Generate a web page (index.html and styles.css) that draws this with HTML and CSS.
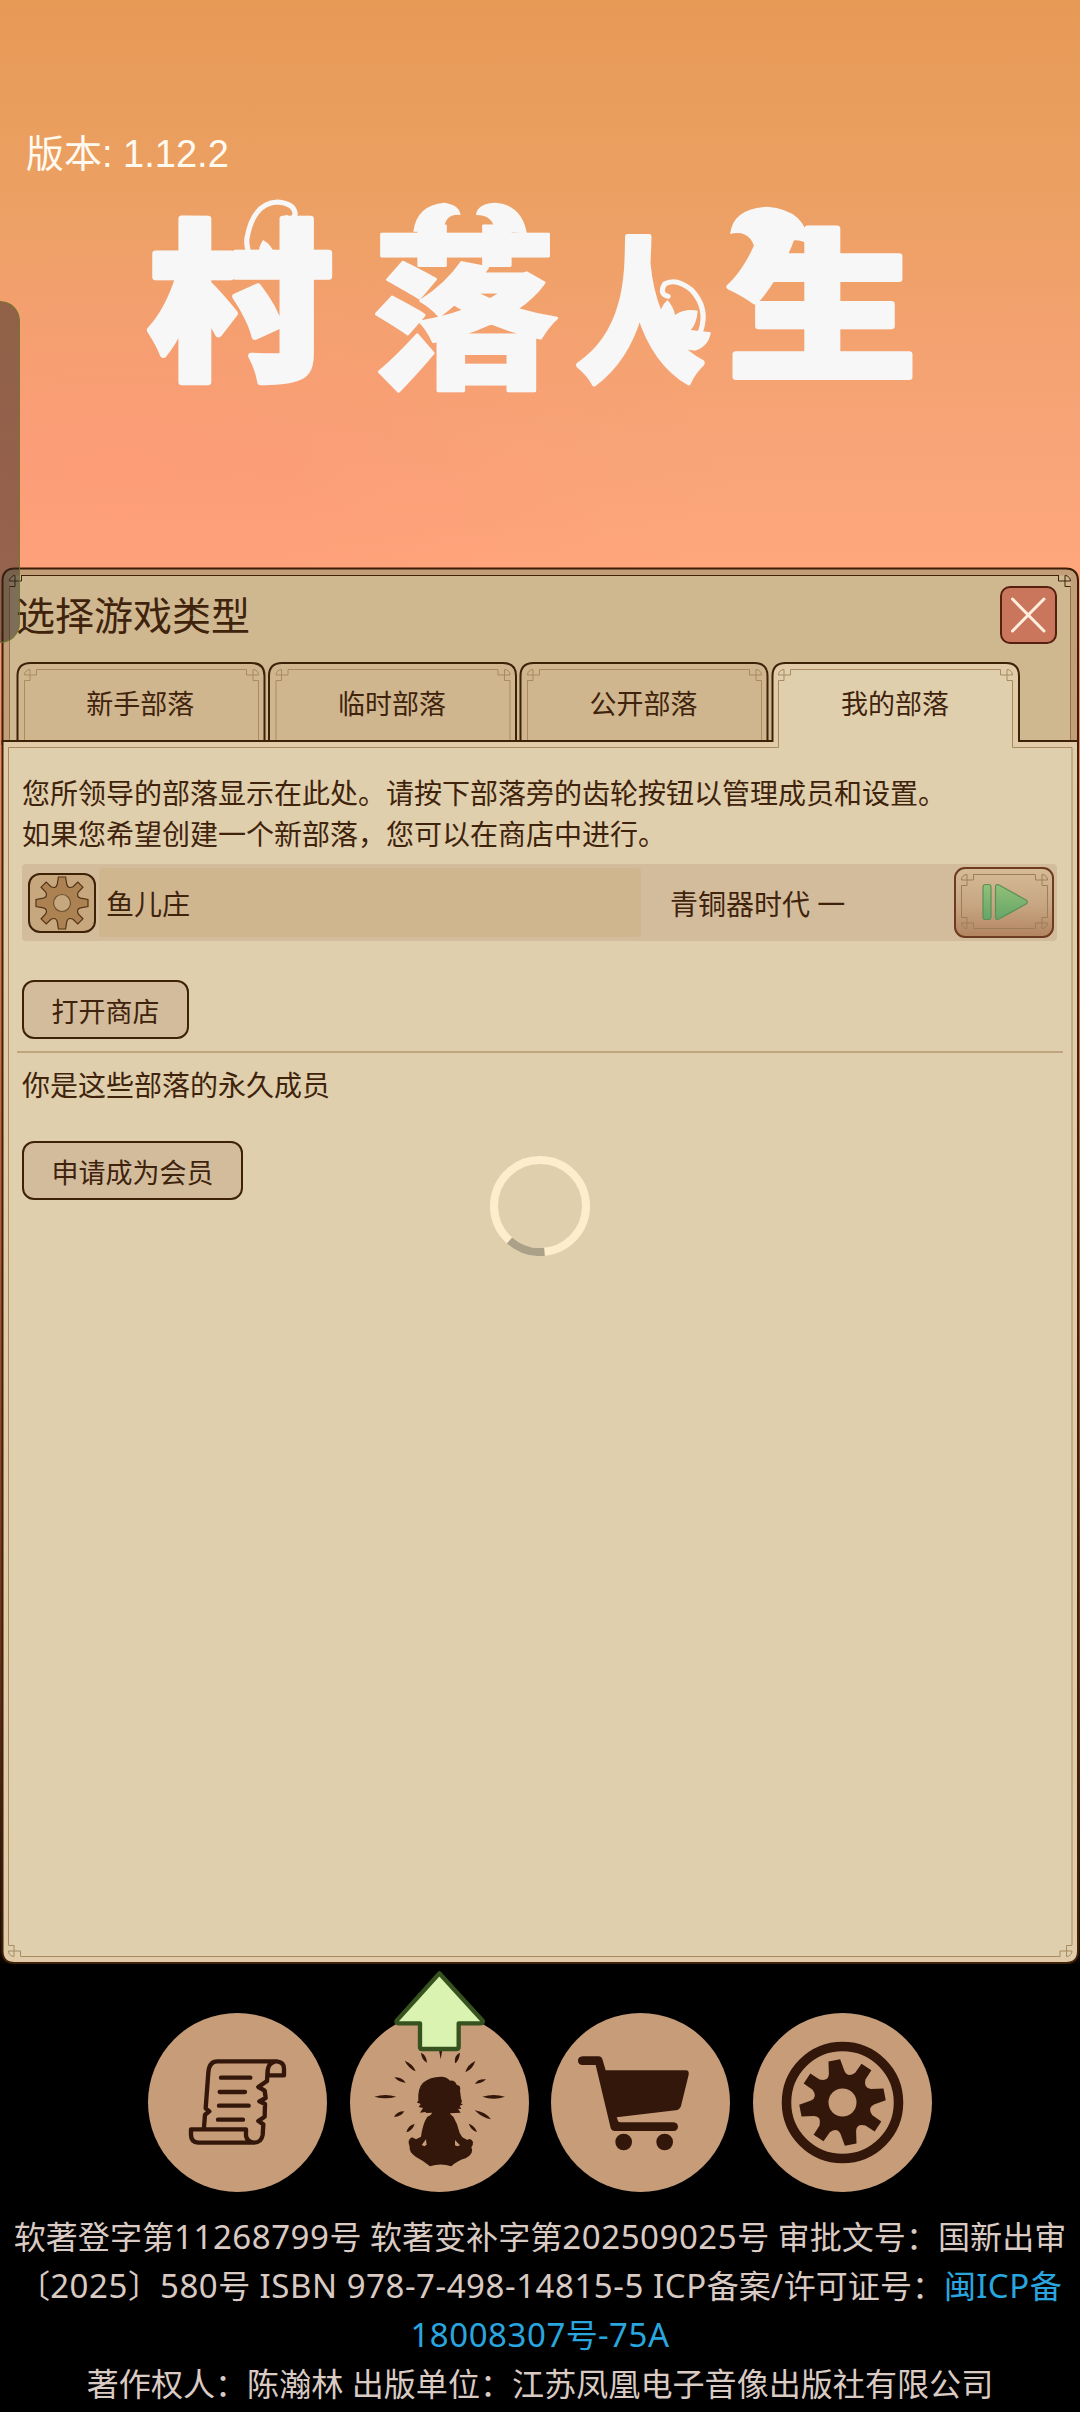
FILE: index.html
```html
<!DOCTYPE html>
<html lang="zh-CN">
<head>
<meta charset="utf-8">
<title>村落人生</title>
<link rel="stylesheet" href="styles.css">
</head>
<body>
<svg class="defs" aria-hidden="true">
  <defs>
    <path id="corner" d="M12 0V5.5H0A5.5 5.5 0 0 1 5.5 0V11H0"/>
    <path id="gear" d="M3.6-26L4.8-18.5Q6-14 11-16.3L15.8-20.9L20.9-15.8L16.3-11Q14-6 18.5-4.8L26-3.6L26 3.6L18.5 4.8Q14 6 16.3 11L20.9 15.8L15.8 20.9L11 16.3Q6 14 4.8 18.5L3.6 26L-3.6 26L-4.8 18.5Q-6 14-11 16.3L-15.8 20.9L-20.9 15.8L-16.3 11Q-14 6-18.5 4.8L-26 3.6L-26-3.6L-18.5-4.8Q-14-6-16.3-11L-20.9-15.8L-15.8-20.9L-11-16.3Q-6-14-4.8-18.5L-3.6-26Z"/>
    <g id="tab-frame">
      <path class="tab-fill" d="M17.5 741V676Q17.5 663 30.5 663H251.500Q264.500 663 264.500 676V741"/>
      <path class="thin" d="M36.500 669.500H246.500M24.500 680.500V740M258.500 680.500V740"/>
      <use href="#corner" class="thin" transform="translate(24.500 669.500)"/>
      <use href="#corner" class="thin" transform="translate(258.500 669.500) scale(-1 1)"/>
    </g>
    <linearGradient id="green" x1="0" y1="0" x2="0" y2="1">
      <stop offset="0" stop-color="#92c078"/><stop offset="1" stop-color="#66a568"/>
    </linearGradient>
  </defs>
</svg>
<main class="screen">
  <header class="hero">
    <p class="version">版本: 1.12.2</p>
    <svg class="logo" viewBox="0 0 1080 567" role="img" aria-label="村落人生">
      <text transform="translate(148 365) scale(.98 .91)" font-size="188">村</text>
      <text class="fine" transform="translate(372 374) scale(.99 .92)" font-size="188">落</text>
      <text transform="translate(576 369) scale(.69 .83)" font-size="186">人</text>
      <text transform="translate(727 366) scale(1.01 .85)" font-size="188">生</text>
      <g transform="translate(0 100) scale(.3444 .3333)">
        <path class="curl" d="M757 500Q712 465 717 415Q735 310 805 306Q855 310 857 342Q850 365 832 353"/>
        <path d="M755 505Q742 450 764 420Q800 440 806 500Z"/>
        <path d="M1200 395Q1210 315 1290 308Q1335 315 1337 345Q1290 340 1288 395Z"/>
        <path d="M1435 395Q1435 345 1382 345Q1385 310 1440 308Q1515 315 1530 400Z"/>
      </g>
      <g transform="translate(540 180) scale(.3444 .3333)">
        <path class="curl" d="M466 455Q490 385 440 330Q395 292 362 312Q345 342 372 349"/>
        <path d="M345 410Q350 380 370 360Q388 380 392 405Q420 385 458 392Q455 430 438 450L496 457Q490 500 450 512L380 500Z"/>
        <path d="M552 162Q560 85 660 80Q775 90 780 193Q715 155 698 235L680 290L627 290Q640 140 552 162Z"/>
      </g>
    </svg>
  </header>

  <section class="panel">
    <svg class="frame" viewBox="0 567 1080 1397" aria-hidden="true">
      <path class="head-edge" d="M2.500 745V581Q2.500 568.500 15 568.500H1065.500Q1078 568.500 1078 581V745"/>
      <path class="head-fill" d="M9.500 575.500H1070.500V745H9.500Z"/>
      <path class="side" d="M9.500 587V741M1070.500 587V741"/>
      <path class="ink" d="M21 575.500H1059"/>
      <use href="#corner" class="ink" transform="translate(9.500 575.500)"/>
      <use href="#corner" class="ink" transform="translate(1070.500 575.500) scale(-1 1)"/>
      <use href="#tab-frame"/>
      <use href="#tab-frame" x="251.500"/>
      <use href="#tab-frame" x="503"/>
      <path class="body-edge" d="M2.500 741H772.500V676Q772.500 663 785.500 663H1006Q1019 663 1019 676V741H1078V1951Q1078 1963 1066 1963H14.500Q2.500 1963 2.500 1951Z"/>
      <path class="body-fill" d="M8.500 747.500H778.500V669.500H1012.500V747.500H1072V1956.500H8.500Z"/>
      <path class="thin" d="M8.500 1945V747.500H778.500V680.500M790.500 669.500H1000.500M1012.500 680.500V747.500H1072V1945M20.500 1956.500H1060"/>
      <use href="#corner" class="thin" transform="translate(778.500 669.500)"/>
      <use href="#corner" class="thin" transform="translate(1012.500 669.500) scale(-1 1)"/>
      <use href="#corner" class="thin" transform="translate(8.500 1956.500) scale(1 -1)"/>
      <use href="#corner" class="thin" transform="translate(1072 1956.500) scale(-1 -1)"/>
    </svg>
    <div class="title-row">
      <h1 class="title">选择游戏类型</h1>
      <button class="close" aria-label="关闭">
        <svg viewBox="0 0 57 57"><path d="M12.500 13L44 45M44 13L12.500 45"/></svg>
      </button>
    </div>
    <nav class="tabs">
      <a class="tab">新手部落</a>
      <a class="tab">临时部落</a>
      <a class="tab">公开部落</a>
      <a class="tab">我的部落</a>
    </nav>
    <div class="content">
      <p class="intro">您所领导的部落显示在此处。请按下部落旁的齿轮按钮以管理成员和设置。<br>如果您希望创建一个新部落，您可以在商店中进行。</p>
      <div class="tribe">
        <button class="gear-btn" aria-label="设置">
          <svg viewBox="-34 -30 68 60"><use href="#gear"/><circle r="8.500"/></svg>
        </button>
        <span class="tribe-name">鱼儿庄</span>
        <span class="tribe-age">青铜器时代 一</span>
        <button class="play-btn" aria-label="进入">
          <svg viewBox="954 868 100 70">
            <g class="play-frame">
              <path d="M973 874.500H1035M973 928.500H1035M961.500 885.500V917.500M1047.500 885.500V917.500"/>
              <use href="#corner" transform="translate(961.500 874.500)"/>
              <use href="#corner" transform="translate(1047.500 874.500) scale(-1 1)"/>
              <use href="#corner" transform="translate(961.500 928.500) scale(1 -1)"/>
              <use href="#corner" transform="translate(1047.500 928.500) scale(-1 -1)"/>
            </g>
            <rect class="go" x="983" y="884.500" width="8" height="35" rx="2.500"/>
            <path class="go" d="M995.500 887Q995.500 883.500 999 885L1026 900Q1029 902 1026 904L999 919Q995.500 920.500 995.500 917Z"/>
          </svg>
        </button>
      </div>
      <button class="btn shop">打开商店</button>
      <hr class="rule">
      <p class="member">你是这些部落的永久成员</p>
      <button class="btn join">申请成为会员</button>
    </div>
    <svg class="spinner" viewBox="-50 -50 100 100" aria-hidden="true">
      <circle r="46"/>
      <path d="M4.500 45.800A46 46 0 0 1-30.500 34.500"/>
    </svg>
  </section>

  <nav class="dock">
    <a class="dock-item" aria-label="公告">
      <svg viewBox="84 219 537 537">
        <g class="line">
          <path d="M252 562L255 524L268 514L257 505L265 397Q268 364 292 364H470Q492 366 492 386V406H443V392Q445 371 462 366M443 390L441 423L415 441L434 452L437 474L418 484L435 492L434 530L415 543L430 553L428 585Q424 608 402 608H235Q213 606 213 585V568H378V588Q382 606 402 608"/>
          <path d="M303 413H391M299 456H375M297 497H386M294 539H369"/>
        </g>
      </svg>
    </a>
    <a class="dock-item" aria-label="部落">
      <svg viewBox="688 219 537 537">
        <path d="M761 470Q794 460 827 470Q794 480 761 470ZM1085 470Q1119 460 1153 470Q1119 482 1085 470ZM821 412Q845 412 855 428Q836 428 821 412ZM852 362Q878 372 885 394Q864 386 852 362ZM901 338Q918 345 919 368Q903 360 901 338ZM955 330H965L960 358ZM1018 338Q1000 345 1003 370Q1016 362 1018 338ZM1064 363Q1040 374 1034 397Q1056 388 1064 363ZM1096 418Q1072 416 1063 431Q1082 432 1096 418ZM1062 511Q1095 516 1111 538Q1085 534 1062 511ZM851 514Q828 514 820 531Q842 530 851 514ZM882 552Q862 556 857 577Q876 572 882 552ZM1044 551Q1062 556 1069 576Q1052 572 1044 551Z"/>
        <path fill-rule="evenodd" d="M898 518L907 504L894 501L900 492L888 487L893 483Q890 445 907 428Q928 410 960 410Q977 409 988 422Q1002 420 1008 434Q1022 436 1018 452L1021 475L1024 485L1020 490L1027 493L1017 498L1022 507L1012 506L1020 518L988 520Q990 526 998 530Q1011 551 1017 579L1025 592L1040 600Q1050 592 1057 606Q1058 615 1052 622Q1062 640 1035 655Q1010 662 992 679Q960 668 928 679Q905 660 885 650Q864 635 867 620Q858 600 874 592L886 598L901 590Q906 551 920 530Q932 526 934 518L917 519L914 516ZM903 615L916 598L918 614L911 619ZM1003 600V616L1010 619L1018 616Z"/>
        <path class="arrow" d="M956 100L1086 242Q1088 250 1078 250H1014V320Q1014 327 1006 327H904Q898 327 898 320V250H836Q825 250 828 242Z"/>
      </svg>
    </a>
    <a class="dock-item" aria-label="商店">
      <svg viewBox="64 219 537 537">
        <path fill-rule="evenodd" d="M159 349H208Q216 349 218 357L228 391H468Q479 391 477 404L454 498Q450 510 438 511L261 532L265 543Q267 547 273 547H432Q444 548 445 560Q444 572 432 573H256Q246 573 243 564L198 375H159Q145 374 145 362Q145 350 159 349Z"/>
        <circle cx="282" cy="606" r="25"/><circle cx="405" cy="606" r="25"/>
      </svg>
    </a>
    <a class="dock-item" aria-label="设置">
      <svg viewBox="-89.500 -89.500 179 179">
        <circle class="ring" r="56"/>
        <use href="#gear" transform="rotate(-11) scale(1.650)"/>
        <circle class="hole" r="14"/>
      </svg>
    </a>
  </nav>

  <footer class="legal">
    <p>软著登字第<span>11268799</span>号 软著变补字第<span>202509025</span>号 审批文号：国新出审</p>
    <p>〔<span>2025</span>〕<span>580</span>号<span> ISBN 978-7-498-14815-5 ICP</span>备案<span>/</span>许可证号：<a>闽<span>ICP</span>备</a></p>
    <p><a><span>18008307</span>号<span>-75A</span></a></p>
    <p>著作权人：陈瀚林 出版单位：江苏凤凰电子音像出版社有限公司</p>
  </footer>
  <div class="edge-handle"></div>
</main>
</body>
</html>
```
FILE: styles.css
```css
* { box-sizing: border-box; margin: 0; padding: 0; }
body {
  width: 1080px;
  background: #000;
  font-family: "Noto Sans", "Noto Sans CJK SC", sans-serif;
  color: #3f230c;
}
button { font: inherit; color: inherit; background: none; border: 0; }
.defs { position: absolute; width: 0; height: 0; }

.screen {
  position: relative;
  display: flex;
  flex-direction: column;
  height: 2412px;
  overflow: hidden;
  background:
    radial-gradient(ellipse 620px 230px at 120px 460px, rgba(255, 145, 117, .42), rgba(255, 145, 117, 0)),
    linear-gradient(#e79a56 0, #eba062 180px, #f3a26f 330px, #f8a478 440px, #ffa67c 568px, #ef8a62 760px, #c86743 1100px, #702f19 1650px, #200c05 1950px, #000 1966px);
}

/* Hero */
.hero { position: relative; height: 567px; padding: 127px 26px 0; }
.version {
  color: #fffaf0;
  font: 38px/54px "Liberation Sans", "Noto Sans CJK SC", sans-serif;
}
.logo {
  position: absolute;
  inset: 0;
  width: 1080px;
  height: 567px;
  fill: #f7f7f7;
  font-family: "Noto Sans CJK SC", sans-serif;
  font-weight: 900;
}
.logo text { stroke: #f7f7f7; stroke-width: 7; stroke-linejoin: round; }
.logo .fine { stroke-width: 3; }
.logo .curl { fill: none; stroke: #f7f7f7; stroke-width: 15; stroke-linecap: round; }

/* Panel */
.panel { position: relative; height: 1397px; }
.panel > * { position: relative; }
.panel > .frame { position: absolute; inset: 0; width: 1080px; height: 1397px; }
.head-edge { fill: #c29f78; stroke: #3d1d08; stroke-width: 2; }
.head-fill { fill: #cfb790; }
.side { fill: none; stroke: #92724c; }
.ink { fill: none; stroke: #3d2208; }
.thin { fill: none; stroke: #a98b5f; }
.tab-fill { fill: #cfb68f; stroke: #3d2208; stroke-width: 2; }
.body-edge { fill: #e1cba9; stroke: #3d2208; stroke-width: 2; }
.body-fill { fill: #dfcfad; }

.title-row {
  display: flex;
  align-items: center;
  justify-content: space-between;
  height: 95px;
  padding: 0 23px 0 16px;
}
.title { font-size: 39px; font-weight: 400; line-height: 56px; }
.close {
  width: 57px;
  height: 58px;
  border: 2px solid #55200f;
  border-radius: 10px;
  background: #ca765c;
}
.close svg { display: block; width: 57px; height: 57px; margin: -2px; }
.close path { stroke: #ffeedd; stroke-width: 3; stroke-linecap: round; }

.tabs { display: flex; gap: 4px; height: 79px; padding-left: 16.500px; }
.tab {
  display: flex;
  align-items: center;
  justify-content: center;
  width: 247.600px;
  padding-top: 2px;
  font-size: 27px;
}

.content {
  display: flex;
  flex-direction: column;
  align-items: flex-start;
  padding: 32px 23px 0 22px;
  font-size: 28px;
}
.intro { line-height: 40.700px; white-space: nowrap; }
.tribe {
  display: flex;
  align-items: center;
  align-self: stretch;
  height: 77px;
  margin-top: 10px;
  padding: 0 3px 0 6px;
  border-radius: 4px;
  background: #d3bc9c;
}
.gear-btn {
  width: 68px;
  height: 60px;
  border: 2px solid #3d2208;
  border-radius: 12px;
  background: #c7a77d;
}
.gear-btn svg { display: block; width: 68px; height: 60px; margin: -2px; }
.gear-btn use { fill: #ad8253; stroke: #513417; stroke-width: 1.200; }
.gear-btn circle { fill: #c7a77d; stroke: #6d5431; stroke-width: 1.200; }
.tribe-name {
  width: 542px;
  height: 69px;
  margin-left: 3px;
  padding-left: 7px;
  border-radius: 4px;
  background: #cfb68f;
  line-height: 72px;
}
.tribe-age { flex: 1; height: 69px; padding-left: 29px; line-height: 72px; }
.play-btn {
  width: 100px;
  height: 71px;
  border: 2px solid #6d3b20;
  border-radius: 11px;
  background: linear-gradient(#d5bb96, #c7a582 55%, #b38561);
}
.play-btn svg { display: block; width: 100px; height: 70px; margin: -2px; }
.play-frame { fill: none; stroke: #9d7e5b; }
.go { fill: url(#green); stroke: #5c9057; stroke-width: 1.200; }

.btn {
  height: 59px;
  padding-top: 4px;
  border: 2px solid #3d2208;
  border-radius: 12px;
  background: #d3bc9c;
  font-size: 27px;
  line-height: 51px;
}
.shop { width: 167px; margin-top: 39px; }
.rule { width: 1046px; height: 2px; margin: 12px 0 0 -5px; border: 0; background: #bfa57f; }
.member { margin-top: 12px; line-height: 40px; }
.join { width: 221px; margin-top: 36px; }

.panel > .spinner { position: absolute; left: 490px; top: 589px; width: 100px; height: 100px; }
.spinner * { fill: none; stroke: #fdedcc; stroke-width: 8; }
.spinner path { stroke: #aba189; }

/* Dock */
.dock { display: flex; justify-content: center; gap: 22.700px; height: 228px; padding-top: 49px; background: #000; }
.dock-item { width: 179px; height: 179px; border-radius: 50%; background: #c69c79; }
.dock-item svg { display: block; width: 179px; height: 179px; overflow: visible; fill: #34170b; }
.dock-item .line { fill: none; stroke: #34170b; stroke-width: 13; stroke-linejoin: round; stroke-linecap: round; }
.dock-item .arrow { fill: #dbf3b1; stroke: #36531f; stroke-width: 13; stroke-linejoin: round; }
.dock-item .ring { fill: none; stroke: #34170b; stroke-width: 9.500; }
.dock-item .hole { fill: #c69c79; }

/* Legal */
.legal {
  height: 220px;
  padding-top: 20px;
  background: #000;
  color: #d9cac3;
  font-size: 32.100px;
  text-align: center;
  white-space: nowrap;
}
.legal p { height: 49px; line-height: 49px; }
.legal span { font-size: 33px; letter-spacing: .55px; line-height: 1; white-space: pre; }
.legal a { color: #29a6df; }

.edge-handle {
  position: absolute;
  left: -2px;
  top: 301px;
  width: 22px;
  height: 342px;
  border: 1px solid rgba(110, 125, 40, .8);
  border-radius: 0 20px 20px 0;
  background: rgba(45, 35, 32, .5);
}
```
